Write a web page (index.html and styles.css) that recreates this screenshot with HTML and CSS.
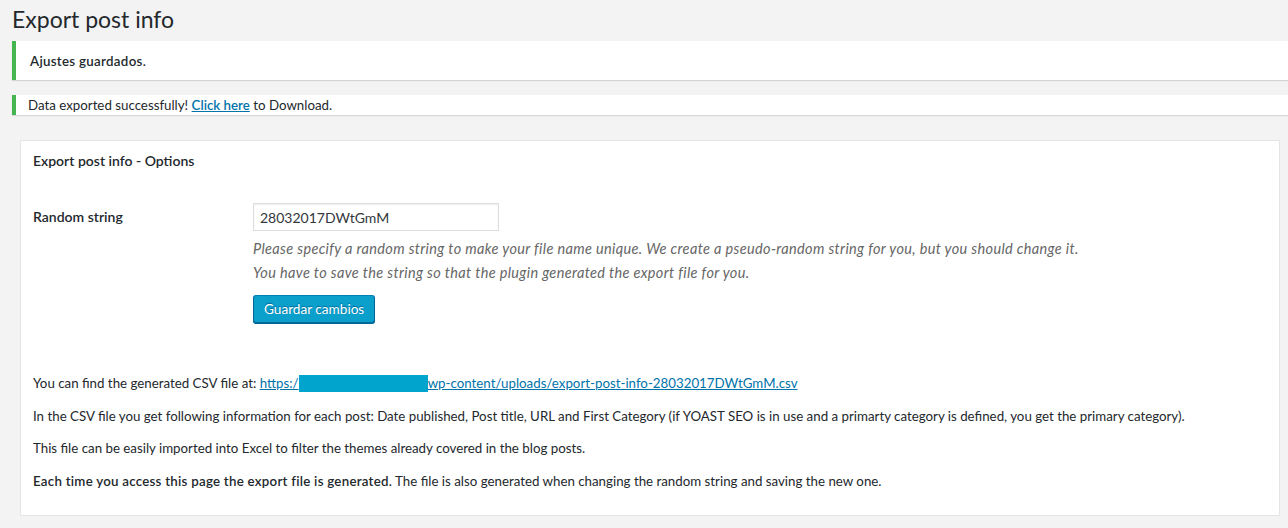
FILE: index.html
```html
<!DOCTYPE html>
<html lang="es">
<head>
<meta charset="utf-8">
<title>Export post info</title>
<link rel="stylesheet" href="styles.css">
</head>
<body>
<div class="wrap">
  <h1 class="page-title">Export post info</h1>
  <div class="notice notice-first"><p><strong>Ajustes guardados.</strong></p></div>
  <div class="notice notice-second">Data exported successfully! <a href="#">Click here</a> to Download.</div>
  <div class="postbox">
    <h2 class="box-title">Export post info - Options</h2>
    <div class="form-row">
      <div class="form-label">Random string</div>
      <div class="form-field">
        <input class="text-input" type="text" value="28032017DWtGmM">
        <p class="description">Please specify a random string to make your file name unique. We create a pseudo-random string for you, but you should change it.</p>
        <p class="description">You have to save the string so that the plugin generated the export file for you.</p>
        <button class="button-primary" type="button">Guardar cambios</button>
      </div>
    </div>
    <div class="info">
      <p>You can find the generated CSV file at: <a href="#">https:/<span class="redact"></span>wp-content/uploads/export-post-info-28032017DWtGmM.csv</a></p>
      <p>In the CSV file you get following information for each post: Date published, Post title, URL and First Category (if YOAST SEO is in use and a primarty category is defined, you get the primary category).</p>
      <p>This file can be easily imported into Excel to filter the themes already covered in the blog posts.</p>
      <p><strong>Each time you access this page the export file is generated.</strong> The file is also generated when changing the random string and saving the new one.</p>
    </div>
  </div>
</div>
</body>
</html>
```
FILE: styles.css
```css
html, body {
  margin: 0;
  padding: 0;
  background: #f3f3f3;
}
body {
  font-family: Lato, "Noto Sans", "Liberation Sans", sans-serif;
  font-size: 13.3px;
  color: #23282d;
}
.wrap {
  padding: 0 0 0 12px;
}
.page-title {
  font-size: 23px;
  font-weight: 400;
  line-height: 29px;
  margin: 0;
  padding: 5px 0 7px 0;
  color: #23282d;
}
.notice {
  background: #fff;
  border-left: 4px solid #46b450;
  box-shadow: 0 1px 1px 0 rgba(0,0,0,.12);
}
.notice-first {
  height: 39px;
  display: flex;
  align-items: center;
  padding: 0 14px;
}
.notice-first p {
  margin: 0;
}
.notice-first strong {
  font-weight: 600;
  letter-spacing: 0.3px;
}
.notice-second {
  margin-top: 15px;
  height: 20px;
  line-height: 20px;
  padding: 0 12px;
}
.notice-second a {
  color: #0073aa;
  font-weight: 600;
}
.postbox {
  margin: 25px 8px 0 8px;
  background: #fff;
  border: 1px solid #e5e5e5;
  box-shadow: 0 1px 1px rgba(0,0,0,.04);
  padding: 10px 12px 14px 12px;
  height: 350px;
}
.box-title {
  font-size: 14px;
  font-weight: 600;
  margin: 0;
  line-height: 20px;
}
.form-row {
  display: flex;
  margin-top: 33px;
}
.form-label {
  width: 220px;
  font-size: 14px;
  font-weight: 600;
  padding-top: 4px;
}
.form-field {
  display: flex;
  flex-direction: column;
  align-items: flex-start;
}
.text-input {
  width: 246px;
  height: 28px;
  box-sizing: border-box;
  border: 1px solid #ddd;
  box-shadow: inset 0 1px 2px rgba(0,0,0,.07);
  padding: 0 6px;
  font-family: inherit;
  font-size: 14px;
  color: #32373c;
  margin: -1px 0 0 0;
}
.description {
  margin: 8px 0 0 0;
  font-style: italic;
  font-size: 14.5px;
  letter-spacing: 0.35px;
  line-height: 20px;
  color: #666;
}
.description + .description {
  margin-top: 4px;
}
.button-primary {
  margin-top: 12px;
  height: 28px;
  padding: 0 10px 1px;
  background: #0ba0cc;
  border: 1px solid #0073aa;
  border-color: #0080b0 #006799 #006799;
  border-radius: 3px;
  box-shadow: 0 1px 0 #006799;
  color: #fff;
  font-family: inherit;
  font-size: 13.6px;
  letter-spacing: 0;
  text-shadow: 0 -1px 1px #006799;
}
.info {
  margin-top: 50px;
}
.info p {
  margin: 0 0 12.5px 0;
  line-height: 20px;
}
.info a {
  color: #0073aa;
}
.info strong {
  font-weight: 600;
  letter-spacing: 0.25px;
}
.redact {
  display: inline-block;
  width: 129px;
  height: 17px;
  vertical-align: -4px;
  background: #00a4cd;
}
```
